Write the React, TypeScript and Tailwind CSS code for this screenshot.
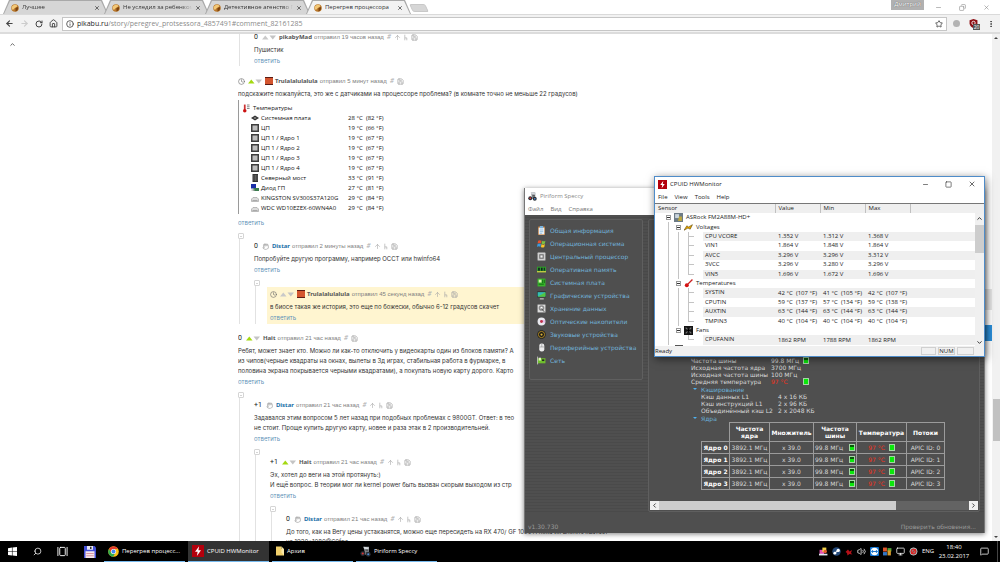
import React from "react";
import {
  ArrowLeft, ArrowRight, RotateCw, Home, Info, Star, X, Minus, Square, Copy, Search,
  Volume2, MessageSquare, Save, Clock, ArrowUp, ChevronUp, ChevronDown, ChevronLeft,
  ChevronRight, MoreVertical, Hand, GalleryHorizontal, Monitor,
} from "lucide-react";

/* ---------- browser chrome ---------- */

const Cookie = () => (
  <svg viewBox="0 0 16 16" className="size-2 shrink-0">
    <circle cx="8" cy="8" r="7.5" fill="#b9772a" />
    <path d="M2 5C5 1 10 0 13 4c-2 3-7 4-9 8C1 10 1 7 2 5z" fill="#f3c877" />
    <path d="M9 8l5-2c1 4-1 8-5 9z" fill="#7c430f" />
  </svg>
);

function Tab({ title, active = false }: { title: string; active?: boolean }) {
  return (
    <div className={`-mr-1 h-3.5 w-[105px] bg-[#a9a9a9] pt-px [clip-path:polygon(0_100%,6px_0,calc(100%-6px)_0,100%_100%)] ${active ? "z-10" : ""}`}>
      <div className={`flex h-full items-center gap-[3px] px-2 [clip-path:polygon(1px_100%,7px_0,calc(100%-7px)_0,calc(100%-1px)_100%)] ${active ? "bg-[#f2f2f2]" : "bg-[#d6d6d6]"}`}>
        <Cookie />
        <a href="#tab" className={`min-w-0 flex-1 overflow-hidden text-[6px] whitespace-nowrap text-[#333] ${active ? "" : "[mask-image:linear-gradient(to_right,black_85%,transparent)]"}`}>{title}</a>
        <button aria-label="Закрыть вкладку"><X className="size-[6px] text-[#444]" strokeWidth={3} /></button>
      </div>
    </div>
  );
}

function Browser() {
  return (
    <>
      <div className="flex h-3.5 shrink-0 items-start bg-white pl-[3px]">
        <Tab title="Лучшее" />
        <Tab title="Не уследил за ребенком" />
        <Tab title="Детективное агенство П" />
        <Tab title="Перегрев процессора" active />
        <button aria-label="Новая вкладка" className="mt-1 ml-1 h-2 w-4 skew-x-[25deg] rounded-xs border border-[#c8c8c8] bg-[#d6d6d6]" />
        <div className="flex-1" />
        <span className="h-[10px] w-[33px] bg-[#b1b1b1] text-center text-[6px] leading-[9px] text-white [text-shadow:0_0_1px_#333]">Дмитрий</span>
        <div className="flex h-3.5 items-center gap-[17px] pr-2.5 pl-[11px] text-[#888]">
          <button aria-label="Свернуть"><Minus className="size-[7px]" /></button>
          <button aria-label="Развернуть"><Copy className="size-[7px] rotate-90" /></button>
          <button aria-label="Закрыть"><X className="size-[7px]" /></button>
        </div>
      </div>
      <div className="flex h-5 shrink-0 items-center border-t border-b-2 border-t-[#dadada] border-b-[#dcdcdc] bg-[#f2f2f2] px-[5px] text-[#444]">
        <div className="flex w-[57px] shrink-0 items-center gap-[6px]">
          <button aria-label="Назад"><ArrowLeft className="size-[9px]" strokeWidth={3} /></button>
          <button aria-label="Вперёд"><ArrowRight className="size-[9px] text-[#ccc]" strokeWidth={3} /></button>
          <button aria-label="Обновить"><RotateCw className="size-2" strokeWidth={3} /></button>
          <button aria-label="Домой"><Home className="size-[9px]" strokeWidth={2.5} /></button>
        </div>
        <div className="flex h-[14px] min-w-0 flex-1 items-center gap-[3px] border border-[#c6c6c6] bg-white px-[3px]">
          <Info className="size-2 shrink-0" strokeWidth={2.5} />
          <div className="relative flex-1">
            <div className="text-[7px] leading-[10px] text-[#8a8a8a]" aria-hidden="true"><span className="text-[#222]">pikabu.ru</span>/story/peregrev_protsessora_4857491#comment_82161285</div>
            <input aria-label="Адресная строка" className="absolute inset-0 w-full bg-transparent text-[7px] outline-none" />
          </div>
          <button aria-label="В закладки"><Star className="size-2" strokeWidth={2.5} /></button>
        </div>
        <div className="flex items-center gap-[9px] pl-[6px]">
          <span className="size-[7px] rounded-full bg-[#b3b3b3]" />
          <span className="relative">
            <svg viewBox="0 0 16 16" className="size-[9px]"><path d="M8 0l7 2v6c0 4-4 7-7 8-3-1-7-4-7-8V2z" fill="#8d0f14" /><circle cx="8" cy="7" r="3" fill="none" stroke="#fff" strokeWidth="1.5" /></svg>
            <span className="absolute top-[5px] left-[4px] h-[6px] w-[7px] bg-[#555] text-center text-[5px] leading-[6px] text-white">20</span>
          </span>
          <button aria-label="Меню"><MoreVertical className="size-2" strokeWidth={3} /></button>
        </div>
      </div>
    </>
  );
}

/* ---------- page ---------- */

type CommentProps = {
  score?: string;
  vote?: "grey" | "green" | "hand";
  user: string;
  when: string;
  avatar?: boolean;
  self?: boolean;
  root?: boolean;
  highlight?: boolean;
  lines?: string[];
  media?: React.ReactNode;
  children?: React.ReactNode;
};

const Branch = () => (
  <svg viewBox="0 0 10 16" className="h-[7px] w-1" fill="none" stroke="currentColor" strokeWidth="1.6"><path d="M2 1v14M2 9h5v6" /></svg>
);

function Comment({ score, vote = "grey", user, when, avatar, self, root, highlight, lines = [], media, children }: CommentProps) {
  return (
    <article>
      <div className={highlight ? "-ml-[3px] bg-[#fff5d0] pt-px pb-px pl-[3px]" : ""}>
        <header className="flex h-3 items-center text-[6px] whitespace-nowrap text-[#808080]">
          {score ? <span className="mr-1 text-[7px] text-[#222]">{score}</span> : <Clock className="mr-[3px] size-[7px] text-[#666]" />}
          {vote === "hand" ? <Hand className="mr-[3px] size-[7px] -rotate-12 text-[#999]" /> : (
            <svg viewBox="0 0 28 10" className="mr-[3px] h-[5px] w-[14px]">
              <path d="M0 9l6.500-8L13 9z" fill={vote === "green" ? "#a4d911" : "#c9c9c9"} />
              <path d="M15 1h13l-6.500 8z" fill="#c4c4c4" />
            </svg>
          )}
          {avatar && <span className="mr-[2px] h-2 w-2 border-y border-[#5b1b14] bg-[#d4552f]" />}
          <a href="#user" className={`mr-[2px] font-['Noto_Sans',sans-serif] font-bold ${self ? "text-[#1b6fa8]" : "text-[#555]"}`}>{user}</a>
          <span className="font-['Liberation_Sans',sans-serif]">отправил {when}</span>
          <span className="ml-[3px] flex items-center gap-[3px] text-[#a5a5a5]">
            <span className="text-[7px] text-[#b0b0b0] italic">#</span>
            {!root && <><ArrowUp className="size-[7px]" /><Branch /></>}
            <Save className="size-[7px]" strokeWidth={2.5} />
          </span>
        </header>
        {lines.length > 0 && (
          <p className="mt-0.5 font-['Inter',sans-serif] text-[6px] leading-[10px] whitespace-nowrap text-[#333]">
            {lines.map((l) => <span key={l} className="block">{l}</span>)}
          </p>
        )}
        {media}
        <a href="#reply" className="mt-px block font-['Inter',sans-serif] text-[6px] leading-[10px] text-[#5f93b8]">ответить</a>
      </div>
      {children && (
        <div className="mt-[5px]">
          <button aria-label="Свернуть ветку" className="flex size-[6px] items-center rounded-[1px] border border-[#d5d5d5] px-px"><span className="h-px w-full bg-[#d5d5d5]" /></button>
          <div className="ml-px border-l border-[#e2e2e2] pt-px pl-[14px]">{children}</div>
        </div>
      )}
    </article>
  );
}

const sensors: [string, string, string][] = [
  ["board", "Системная плата", "28 °C  (82 °F)"],
  ["cpu", "ЦП", "19 °C  (66 °F)"],
  ["cpu", "ЦП 1 / Ядро 1", "19 °C  (67 °F)"],
  ["cpu", "ЦП 1 / Ядро 2", "19 °C  (67 °F)"],
  ["cpu", "ЦП 1 / Ядро 3", "19 °C  (67 °F)"],
  ["cpu", "ЦП 1 / Ядро 4", "19 °C  (67 °F)"],
  ["north", "Северный мост", "33 °C  (91 °F)"],
  ["gpu", "Диод ГП", "27 °C  (81 °F)"],
  ["disk", "KINGSTON SV300S37A120G", "29 °C  (84 °F)"],
  ["disk", "WDC WD10EZEX-60WN4A0", "29 °C  (84 °F)"],
];

function SensorIcon({ kind }: { kind: string }) {
  return (
    <svg viewBox="0 0 16 16" className="size-2 shrink-0">
      {kind === "board" && <><path d="M8 3l8 5-8 5-8-5z" fill="#333" /><path d="M8 6l3 2-3 2-3-2z" fill="#999" /></>}
      {kind === "cpu" && <><rect width="16" height="16" fill="#3d3d3d" /><rect x="3" y="3" width="10" height="10" fill="#bdbdbd" /></>}
      {kind === "north" && <><rect x="3" width="11" height="16" fill="#333" /><path d="M6 2v12M9 2v12M12 2v12" stroke="#888" /></>}
      {kind === "gpu" && <><rect width="10" height="9" fill="#1a2ea8" /><rect x="5" y="8" width="11" height="6" fill="#3b7d4f" /><path d="M1 12h7" stroke="#999" strokeWidth="2" /></>}
      {kind === "disk" && <><path d="M1 10l3-3h8l3 3v5H1z" fill="#dcdcdc" stroke="#888" /><path d="M3 13h10" stroke="#777" /></>}
    </svg>
  );
}

const SensorShot = () => (
  <div className="mt-px mb-1 h-[114px] w-[160px] border-l border-[#9a9a9a] pt-[3px] pl-1 font-['Open_Sans',sans-serif] text-[6px] leading-[10px] text-[#111]">
    <div className="flex items-center gap-[3px]">
      <svg viewBox="0 0 16 20" className="h-[9px] w-[7px]"><path d="M4 1v12" stroke="#c33" strokeWidth="4" /><circle cx="4" cy="15" r="4" fill="#c11" /><path d="M9 2h6M9 6h6M9 10h6" stroke="#777" strokeWidth="2" /></svg>
      Температуры
    </div>
    <table className="ml-2 border-collapse">
      <tbody>
        {sensors.map(([kind, name, value]) => (
          <tr key={name}>
            <td className="w-[97px] p-0"><span className="flex h-[10px] items-center gap-0.5 whitespace-nowrap"><SensorIcon kind={kind} />{name}</span></td>
            <td className="p-0 whitespace-pre">{value}</td>
          </tr>
        ))}
      </tbody>
    </table>
  </div>
);

function Page() {
  return (
    <div className="flex min-h-0 flex-1 bg-white font-['Roboto',sans-serif]">
      <aside className="w-[238px] shrink-0 pt-[7px] pl-[9px]"><ChevronUp className="size-[7px] text-[#555]" strokeWidth={3} /></aside>
      <main className="min-w-0 flex-1 overflow-hidden">
        <div className="ml-px h-[32px] overflow-hidden border-l border-[#e2e2e2] pl-[14px]">
          <div className="-mt-[3px]"><Comment score="0" user="pikabyMad" when="19 часов назад" lines={["Пушистик"]} /></div>
        </div>
        <div className="mt-[9px]">
          <Comment root vote="green" avatar user="Trulalalulalula" when="5 минут назад"
            lines={["подскажите пожалуйста, это же с датчиками на процессоре проблема? (в комнате точно не меньше 22 градусов)"]}
            media={<SensorShot />}>
            <Comment score="0" vote="hand" self user="Distar" when="2 минуты назад" lines={["Попробуйте другую программу, например OCCT или hwinfo64"]}>
              <Comment highlight avatar user="Trulalalulalula" when="45 секунд назад" lines={["в биосе такая же история, это еще по божески, обычно 6-12 градусов скачет"]} />
            </Comment>
          </Comment>
        </div>
        <div className="mt-2">
          <Comment root score="0" vote="green" user="Hait" when="21 час назад" lines={[
            "Ребят, может знает кто. Можно ли как-то отключить у видеокарты один из блоков памяти? А",
            "из чипов(черные квадраты на окнах, вылеты в 3д играх, стабильная работа в фурмарке,  в",
            "половина экрана покрывается черными квадратами), а покупать новую карту дорого. Карто",
          ]}>
            <Comment score="+1" vote="hand" self user="Distar" when="21 час назад" lines={[
              "Задавался этим вопросом 5 лет назад при подобных проблемах с 9800GT. Ответ: в тео",
              "не стоит. Проще купить другую карту, новее и раза этак в 2 производительней.",
            ]}>
              <Comment score="+1" vote="green" user="Hait" when="21 час назад" lines={[
                "Эх, хотел до веги на этой протянуть:)",
                "И ещё вопрос. В теории мог ли kernel power быть вызван скорым выходом из стр",
              ]}>
                <Comment score="0" vote="hand" self user="Distar" when="21 час назад" lines={[
                  "До того, как на Вегу цены устаканятся, можно еще пересидеть на RX 470/ GF 1050TI пока их вполне хватает",
                  "на 1920*1080@60fps",
                ]} />
              </Comment>
            </Comment>
          </Comment>
        </div>
      </main>
      <div className="flex w-[7px] shrink-0 flex-col pt-[255px]">
        <div className="h-[21px] bg-[#e4e4e4]" />
        <div className="mt-[15px] h-4 bg-[#2b8fd9]" />
      </div>
      <div className="flex w-2 shrink-0 flex-col items-center bg-[#f1f1f1] py-[3px]">
        <svg viewBox="0 0 8 4" className="h-[2px] w-1"><path d="M0 4l4-4 4 4z" fill="#444" /></svg>
        <div className="mt-[360px] h-[42px] w-[7px] bg-[#c1c1c1]" />
        <svg viewBox="0 0 8 4" className="mt-auto h-[2px] w-1"><path d="M0 0l4 4 4-4z" fill="#444" /></svg>
      </div>
    </div>
  );
}

/* ---------- Speccy ---------- */

const SpeccyLogo = ({ className }: { className: string }) => (
  <svg viewBox="0 0 16 16" className={className}>
    <path d="M5 1h8v12H8z" fill="#8d9299" /><path d="M5 1l8 1-1 3-6-1z" fill="#d5d9dd" /><path d="M8 6h4M8 9h4" stroke="#444" strokeWidth="1.5" />
    <circle cx="4" cy="11" r="3.5" fill="#2a2f36" /><circle cx="12" cy="12" r="3.5" fill="#2a2f36" /><circle cx="4" cy="11" r="1.5" fill="#d33" /><circle cx="12" cy="12" r="1.5" fill="#4b8bd6" />
  </svg>
);

const navItems = [
  "Общая информация", "Операционная система", "Центральный процессор", "Оперативная память", "Системная плата",
  "Графические устройства", "Хранение данных", "Оптические накопители", "Звуковые устройства", "Периферийные устройства", "Сеть",
];

const NavIcon = ({ n }: { n: number }) => (
  <svg viewBox="0 0 16 16" className="size-[9px] shrink-0">
    {n === 0 && <><rect x="2" y="1" width="12" height="15" fill="#c97b34" /><rect x="3" y="3" width="10" height="12" fill="#e6f1fa" /><rect x="5" width="6" height="4" fill="#7ab3dd" /><path d="M5 7h6M5 10h6M5 13h4" stroke="#6aa2d0" /></>}
    {n === 1 && <><path d="M2 3q3-2 6 0l-1 5q-3-2-6 0z" fill="#e8502c" /><path d="M9 3q3 2 6 0l-1 5q-3 2-6 0z" fill="#7cc142" /><path d="M1 9q3-2 6 0l-1 5q-3-2-6 0z" fill="#3b9be0" /><path d="M8 9q3 2 6 0l-1 5q-3 2-6 0z" fill="#fbc62a" /></>}
    {n === 2 && <><rect x="1" y="1" width="14" height="14" rx="1" fill="#d0d0d0" /><rect x="4" y="4" width="8" height="8" fill="#6e6e6e" /><rect x="6" y="6" width="4" height="4" fill="#eee" /></>}
    {n === 3 && <><rect y="3" width="16" height="10" fill="#2e9b28" /><path d="M2 5h3v5H2zM7 5h3v5H7zM12 5h2v5h-2z" fill="#122" /><path d="M0 12h16" stroke="#e5d34b" strokeWidth="2" /></>}
    {n === 4 && <><rect x="1" y="1" width="14" height="14" fill="#37b52b" /><rect x="3" y="3" width="5" height="5" fill="#d8f3b0" /><path d="M10 3v6M13 3v6M3 11h9" stroke="#0f6511" strokeWidth="1.5" /></>}
    {n === 5 && <><rect y="1" width="16" height="10" rx="1" fill="#222" /><rect x="1" y="2" width="14" height="8" fill="#35bdb4" /><path d="M1 10l14-8v8z" fill="#54c640" /><path d="M5 14h7" stroke="#ccc" strokeWidth="2" /></>}
    {n === 6 && <><rect x="1" y="1" width="14" height="14" fill="#ddd" /><circle cx="8" cy="7" r="5" fill="#8a8a8a" /><circle cx="8" cy="7" r="2" fill="#fff" /><path d="M8 8l5 6" stroke="#444" strokeWidth="1.5" /></>}
    {n === 7 && <><circle cx="8" cy="8" r="7" fill="#e9e9ee" /><path d="M8 8l6-4v7z" fill="#e3b8e6" /><circle cx="8" cy="8" r="2.6" fill="#c0304a" /></>}
    {n === 8 && <><circle cx="8" cy="8" r="7.5" fill="#1b1a16" /><circle cx="8" cy="8" r="5.5" fill="none" stroke="#c99b2b" strokeWidth="1.5" /><circle cx="8" cy="8" r="2" fill="#d9b13b" /></>}
    {n === 9 && <><rect x="4" y="1" width="9" height="14" rx="4" fill="#ececec" /><path d="M8.500 1v6M4 7h9" stroke="#888" /></>}
    {n === 10 && <><rect x="1" y="4" width="14" height="9" fill="#6fbf2c" /><path d="M3 3h4v5H3z" fill="#e6f3c8" /><path d="M9 6h4v3H9z" fill="#222" /><path d="M1 1v14" stroke="#ccc" strokeWidth="1.5" /></>}
  </svg>
);

const Gauge = ({ full = false }: { full?: boolean }) => (
  <span className={`inline-block h-[7px] w-[6px] shrink-0 border border-[#a5d6a5] ${full ? "bg-[#0be80b]" : "bg-linear-to-b from-[#0a5a0a] from-40% to-[#0be80b] to-40%"}`} />
);

function Section({ title }: { title: string }) {
  return (
    <button className="flex h-2 items-center gap-1 pl-[2px] text-[#6bb2da]">
      <svg viewBox="0 0 8 4" className="h-[2px] w-1"><path d="M0 0h8L4 4z" fill="#4fb0ee" /></svg>{title}
    </button>
  );
}

function Speccy() {
  const coreCell = "border border-[#9b9b9b] px-px py-0 text-center whitespace-nowrap";
  return (
    <section aria-label="Piriform Speccy" className="absolute top-[188px] left-[524px] flex h-[345px] w-[461px] flex-col border-x border-[#777] bg-[#4f4f4f] font-['DejaVu_Sans',sans-serif] text-[6px] text-[#d8d8d8] shadow-[0_1px_5px_rgba(0,0,0,0.5)]">
      <div className="h-[27px] shrink-0 bg-white font-['Open_Sans',sans-serif] text-[6px] text-[#888]">
        <div className="flex h-4 items-center gap-[3px] pl-[3px]"><SpeccyLogo className="size-[9px]" />Piriform Speccy</div>
        <nav className="flex h-[10px] items-center gap-[7px] pl-[3px] text-[#777]"><button>Файл</button><button>Вид</button><button>Справка</button></nav>
      </div>
      <div className="flex min-h-0 flex-1 gap-[5px] bg-[repeating-linear-gradient(#4f4f4f_0_2px,#4a4a4a_2px_3px)] px-1 pt-1">
        <nav className="w-[114px] shrink-0 self-start rounded-xs border border-[#5f5f5f] bg-[#4f4f4f] pt-1 pb-3">
          {navItems.map((label, i) => (
            <a key={label} href="#section" className="flex h-[13px] items-center gap-1 pl-[7px] whitespace-nowrap text-[#72b3da]"><NavIcon n={i} />{label}</a>
          ))}
        </nav>
        <div className="flex min-w-0 flex-1 flex-col justify-end rounded-xs border border-[#5f5f5f] bg-[#4f4f4f]">
          <div className="pl-[42px] leading-[7px]">
            <table className="border-collapse">
              <tbody>
                {[["Частота шины", "99.8 МГц", 1], ["Исходная частота ядра", "3700 МГц", 0], ["Исходная частота шины", "100 МГц", 0], ["Средняя температура", "97 °C", 2]].map(([k, v, g]) => (
                  <tr key={k as string} className="h-[7px]">
                    <th scope="row" className="w-[80px] p-0 text-left font-normal whitespace-nowrap">{k}</th>
                    <td className={`p-0 ${g === 2 ? "text-[#f0321c]" : ""}`}><span className="flex h-[7px] w-[38px] items-center justify-between whitespace-nowrap">{v}{g !== 0 && <Gauge full={g === 2} />}</span></td>
                  </tr>
                ))}
              </tbody>
            </table>
            <Section title="Кэширование" />
            <table className="ml-[10px] border-collapse">
              <tbody>
                {[["Кэш данных L1", "4 x 16 КБ"], ["Кэш инструкций L1", "2 x 96 КБ"], ["Объединённый кэш L2", "2 x 2048 КБ"]].map(([k, v]) => (
                  <tr key={k} className="h-[7px]"><th scope="row" className="w-[77px] p-0 text-left font-normal whitespace-nowrap">{k}</th><td className="p-0 whitespace-nowrap">{v}</td></tr>
                ))}
              </tbody>
            </table>
            <Section title="Ядра" />
            <table className="mb-[11px] ml-[10px] border-collapse">
              <thead>
                <tr className="h-[19px] text-white">
                  <td className="w-[28px] p-0" />
                  <th className={`w-10 ${coreCell}`}>Частота<br />ядра</th>
                  <th className={`w-11 ${coreCell}`}>Множитель</th>
                  <th className={`w-[43px] ${coreCell}`}>Частота<br />шины</th>
                  <th className={`w-[50px] ${coreCell}`}>Температура</th>
                  <th className={`w-[38px] ${coreCell}`}>Потоки</th>
                </tr>
              </thead>
              <tbody>
                {[0, 1, 2, 3].map((n) => (
                  <tr key={n} className="h-3">
                    <th scope="row" className={`text-white ${coreCell}`}>Ядро {n}</th>
                    <td className={coreCell}>3892.1 МГц</td>
                    <td className={coreCell}>x 39.0</td>
                    <td className={coreCell}><span className="flex items-center justify-between">99.8 МГц <Gauge /></span></td>
                    <td className={`text-[#f0321c] ${coreCell}`}><span className="flex items-center justify-center gap-1">97 °C <Gauge full /></span></td>
                    <td className={coreCell}>APIC ID: {n}</td>
                  </tr>
                ))}
              </tbody>
            </table>
          </div>
          <div className="mx-px mb-px flex h-[9px] shrink-0 bg-[#636363]">
            <button aria-label="Влево" className="flex w-[9px] items-center justify-center bg-[#f0f0f0] text-[#333]"><ChevronLeft className="size-[7px]" strokeWidth={3} /></button>
            <div className="w-[237px] bg-[#cdcdcd]" />
            <button aria-label="Вправо" className="ml-auto flex w-[9px] items-center justify-center bg-[#f0f0f0] text-[#333]"><ChevronRight className="size-[7px]" strokeWidth={3} /></button>
          </div>
        </div>
      </div>
      <footer className="flex h-[21px] shrink-0 items-center justify-between pt-2 pr-2 pl-[3px] text-[#999]"><span>v1.30.730</span><a href="#update">Проверить обновения...</a></footer>
    </section>
  );
}

/* ---------- HWMonitor ---------- */

const Bolt = ({ className }: { className: string }) => (
  <svg viewBox="0 0 16 16" className={className}><rect width="16" height="16" fill="#b3000c" /><path d="M9.500 1.500L4 9h3.500l-1 5.500L12 7H8.500z" fill="#fff" /></svg>
);

const readings: (string[] | string)[] = [
  "ASRock FM2A88M-HD+", "Voltages",
  ["CPU VCORE", "1.352 V", "1.312 V", "1.368 V"],
  ["VIN1", "1.864 V", "1.848 V", "1.864 V"],
  ["AVCC", "3.296 V", "3.296 V", "3.312 V"],
  ["3VCC", "3.296 V", "3.280 V", "3.296 V"],
  ["VIN5", "1.696 V", "1.672 V", "1.696 V"],
  "Temperatures",
  ["SYSTIN", "42 °C  (107 °F)", "41 °C  (105 °F)", "42 °C  (107 °F)"],
  ["CPUTIN", "59 °C  (137 °F)", "57 °C  (134 °F)", "59 °C  (138 °F)"],
  ["AUXTIN", "63 °C  (144 °F)", "63 °C  (144 °F)", "63 °C  (144 °F)"],
  ["TMPIN3", "40 °C  (104 °F)", "40 °C  (104 °F)", "40 °C  (104 °F)"],
  "Fans",
  ["CPUFANIN", "1862 RPM", "1788 RPM", "1862 RPM"],
];
const shaded = [2, 4, 6, 8, 10, 13];
const lastLeaf = [6, 11, 13];

function GroupIcon({ name }: { name: string }) {
  return (
    <svg viewBox="0 0 16 16" className="size-[9px] shrink-0">
      {name.startsWith("ASRock") && <><rect width="16" height="16" fill="#6d7b86" /><path d="M2 2h7v7H2z" fill="#c9d4dc" /><path d="M9 6h5v8H7z" fill="#bda83d" /></>}
      {name === "Voltages" && <path d="M0 13l5-8 3 2 7-4-4 8-4-2z" fill="#e6a500" stroke="#5b4300" />}
      {name === "Temperatures" && <><path d="M15 1L6 10" stroke="#c22" strokeWidth="2.500" /><circle cx="5" cy="11" r="3.500" fill="#d41212" /></>}
      {name === "Fans" && <><rect width="16" height="16" fill="#151515" /><path d="M3 3l10 10M13 3L3 13" stroke="#777" strokeWidth="2" /><circle cx="8" cy="8" r="2.500" fill="#000" /></>}
    </svg>
  );
}

const Expander = () => (
  <span className="flex size-[5px] shrink-0 items-center border border-[#999] bg-white"><span className="h-px w-full bg-[#333]" /></span>
);

function TreeCell({ row, index }: { row: string[] | string; index: number }) {
  if (index === 0)
    return <span className="flex h-[9px] items-center gap-[3px] pl-[11px]"><Expander /><GroupIcon name={row as string} />{row}</span>;
  const rail = <span className="ml-[13px] w-[10px] shrink-0 self-stretch border-l border-[#c4c4c4]" />;
  if (typeof row === "string")
    return <span className="flex h-full items-center">{rail}<span className="-ml-[2px] flex items-center gap-[3px]"><Expander /><GroupIcon name={row} />{row}</span></span>;
  return (
    <span className="flex h-full items-stretch">
      {rail}
      <span className={`w-[10px] shrink-0 ${index < 12 ? "border-l border-[#c4c4c4]" : ""}`} />
      <span className="flex w-[15px] shrink-0 flex-col">
        <span className="h-[5px] w-[6px] border-b border-l border-[#c4c4c4]" />
        {!lastLeaf.includes(index) && <span className="w-px flex-1 bg-[#c4c4c4]" />}
      </span>
      <span className={`flex-1 pl-[2px] ${shaded.includes(index) ? "bg-[#efefef]" : ""}`}>{row[0]}</span>
    </span>
  );
}

function HWMonitor() {
  return (
    <section aria-label="CPUID HWMonitor" className="absolute top-[176px] left-[654px] flex h-[181px] w-[331px] flex-col border border-[#4f8cc9] bg-white font-['Open_Sans',sans-serif] text-[6px] leading-[9px] text-[#222] shadow-[1px_2px_8px_rgba(0,0,0,0.55)]">
      <div className="flex h-[14px] shrink-0 items-center gap-[3px] pr-2 pl-[3px]">
        <Bolt className="size-[9px]" />
        <span className="flex-1">CPUID HWMonitor</span>
        <div className="flex items-center gap-4">
          <button aria-label="Minimize"><Minus className="size-[7px]" /></button>
          <button aria-label="Maximize"><Square className="size-[7px]" /></button>
          <button aria-label="Close"><X className="size-2" /></button>
        </div>
      </div>
      <nav className="flex h-3 shrink-0 items-center gap-[7px] pl-[3px]"><button>File</button><button>View</button><button>Tools</button><button>Help</button></nav>
      <div className="flex min-h-0 flex-1 overflow-hidden border-t border-[#777]">
        <div className="flex min-w-0 flex-1 flex-col">
          <table className="h-[141px] w-full table-fixed border-collapse">
            <thead>
              <tr className="h-[9px] bg-[#efefef] text-left">
                <th className="w-[120px] border-r border-[#c0c0c0] p-0 pl-[3px] font-normal">Sensor</th>
                <th className="w-[45px] border-r border-[#c0c0c0] p-0 pl-[3px] font-normal">Value</th>
                <th className="w-[45px] border-r border-[#c0c0c0] p-0 pl-[3px] font-normal">Min</th>
                <th className="w-[45px] border-r border-[#c0c0c0] p-0 pl-[3px] font-normal">Max</th>
                <th className="p-0" aria-label="Empty" />
              </tr>
            </thead>
            <tbody>
              {readings.map((row, i) => (
                <tr key={i} className="h-[9px]">
                  <td className="h-[9px] p-0 whitespace-nowrap"><TreeCell row={row} index={i} /></td>
                  {[1, 2, 3].map((c) => (
                    <td key={c} className={`p-0 pl-[3px] whitespace-pre ${shaded.includes(i) ? "bg-[#efefef]" : ""}`}>{typeof row === "string" ? "" : row[c]}</td>
                  ))}
                  <td className={`p-0 ${shaded.includes(i) ? "bg-[#efefef]" : ""}`} />
                </tr>
              ))}
            </tbody>
          </table>
          <span className="ml-5 h-px w-2 shrink-0 bg-[#555]" />
        </div>
        <div className="flex w-[9px] shrink-0 flex-col items-center">
          <div className="h-[10px] w-full bg-[#efefef]" />
          <div className="flex w-full flex-1 flex-col items-center bg-[#f0f0f0] pt-px">
            <ChevronUp className="size-[7px]" strokeWidth={3} />
            <div className="mt-[3px] h-7 w-full bg-[#cdcdcd]" />
            <ChevronDown className="mt-auto size-[7px]" strokeWidth={3} />
          </div>
        </div>
      </div>
      <footer className="flex h-[10px] shrink-0 items-center gap-[2px] bg-[#f0f0f0] pr-[10px]">
        <span className="flex-1">Ready</span>
        <span className="h-2 w-[15px] border border-[#d0d0d0]" />
        <span className="h-2 w-[17px] border border-[#d0d0d0] text-center leading-[7px]">NUM</span>
        <span className="h-2 w-[17px] border border-[#d0d0d0]" />
      </footer>
    </section>
  );
}

/* ---------- taskbar ---------- */

const ChromeLogo = () => (
  <svg viewBox="0 0 24 24" className="size-[11px] shrink-0">
    <circle cx="12" cy="12" r="11.500" fill="#fbc116" />
    <path d="M2 6.300A11.500 11.500 0 0 1 22 6.300H12a5.700 5.700 0 0 0-5 8.500z" fill="#e33b2e" />
    <path d="M2 6.300A11.500 11.500 0 0 0 11 23.500l5-8.500a5.700 5.700 0 0 1-9 0z" fill="#2da94f" />
    <circle cx="12" cy="12" r="5.500" fill="#fff" /><circle cx="12" cy="12" r="4.300" fill="#4285f4" />
  </svg>
);

function Task({ icon, label, active = false }: { icon: React.ReactNode; label: string; active?: boolean }) {
  return (
    <button className={`flex h-full w-[81px] items-center gap-[3px] border-b border-[#76b9ed] pl-1 whitespace-nowrap ${active ? "bg-[#333]" : ""}`}>{icon}{label}</button>
  );
}

function Taskbar() {
  return (
    <footer className="flex h-[21px] shrink-0 items-center bg-black font-['Open_Sans',sans-serif] text-[6px] text-white">
      <div className="flex w-[104px] shrink-0 items-center justify-between px-2">
        <button aria-label="Пуск"><svg viewBox="0 0 16 16" className="size-[9px]"><path d="M0 2l7-1v6.500H0zM8 1l8-1v7.500H8zM0 8.500h7V15l-7-1zM8 8.500h8V16l-8-1z" fill="#fff" /></svg></button>
        <button aria-label="Поиск"><Search className="size-[9px] -scale-x-100" /></button>
        <button aria-label="Представление задач"><GalleryHorizontal className="size-[11px]" /></button>
        <button aria-label="Сохранение">
          <svg viewBox="0 0 16 16" className="size-3"><path d="M0 0h14l2 2v14H0z" fill="#4450d8" /><rect x="4" width="8" height="5" fill="#e8e8f5" /><rect x="8" y="1" width="2" height="3" fill="#333" /><rect x="2" y="7" width="12" height="9" fill="#f6e9ee" /><path d="M3 10h10M3 13h10" stroke="#d0798b" /></svg>
        </button>
      </div>
      <div className="flex h-full flex-1 gap-[3px]">
        <Task icon={<ChromeLogo />} label="Перегрев процесс..." />
        <Task active icon={<Bolt className="size-3 shrink-0" />} label="CPUID HWMonitor" />
        <Task icon={<svg viewBox="0 0 16 20" className="h-[10px] w-2"><path d="M0 1h11v5h5v13H0z" fill="#f0cf6b" /><path d="M11 1v12l5 6V6z" fill="#fbe9a8" /></svg>} label="Архив" />
        <Task icon={<SpeccyLogo className="size-[11px]" />} label="Piriform Speccy" />
      </div>
      <div className="flex items-center gap-1">
        <svg viewBox="0 0 16 16" className="size-[9px]"><path d="M1 5h8v9H1z" fill="#e04fb0" /><path d="M6 1h7v8H6z" fill="#f3d24a" /><path d="M0 12h15v3H0z" fill="#dfe6f2" /><circle cx="11" cy="8" r="3" fill="#e4572e" /></svg>
        <svg viewBox="0 0 16 16" className="size-[9px]"><circle cx="8" cy="8" r="7.500" fill="#254a7a" /><circle cx="11" cy="6" r="3" fill="#fff" /><circle cx="5" cy="11" r="2.500" fill="#fff" /><path d="M5 11l6-5" stroke="#fff" strokeWidth="2" /></svg>
        <svg viewBox="0 0 16 16" className="size-2"><path d="M1 8l5-5 3 4 5-3-2 6 3 3-6-1-4 3-1-5z" fill="#b51018" /></svg>
        <Volume2 className="size-[9px]" />
        <svg viewBox="0 0 16 16" className="size-[9px]"><rect width="16" height="16" rx="2" fill="#1274d0" /><circle cx="8" cy="8" r="6.500" fill="#fff" /><path d="M1.500 8l4-3v2h5V5l4 3-4 3V9h-5v2z" fill="#1b73c9" /></svg>
        <svg viewBox="0 0 16 16" className="size-[9px]"><path d="M0 1h7v7H0z" fill="#e0562b" /><path d="M8 2h7v6H8z" fill="#54a53b" /><path d="M0 9h7v6H0z" fill="#3577c5" /><path d="M8 6h6v9H8z" fill="#d99b2c" /></svg>
        <Monitor className="size-[9px]" />
        <svg viewBox="0 0 16 16" className="size-[9px]"><circle cx="8" cy="8" r="6.500" fill="#888" stroke="#e8e8e8" /><circle cx="8" cy="8" r="4" fill="none" stroke="#d22" strokeWidth="2" /><path d="M4 12l8-8" stroke="#d22" strokeWidth="2" /></svg>
      </div>
      <span className="ml-1 w-[14px]">ENG</span>
      <div className="w-[36px] text-center leading-[9px] whitespace-nowrap"><div>18:40</div><div>23.02.2017</div></div>
      <button aria-label="Уведомления" className="ml-2"><MessageSquare className="size-[9px]" /></button>
      <span className="ml-2 h-full w-[3px] border-l border-[#444]" />
    </footer>
  );
}

export default function App() {
  return (
    <div className="relative flex h-screen flex-col overflow-hidden font-['Open_Sans',sans-serif]">
      <Browser />
      <Page />
      <Speccy />
      <HWMonitor />
      <Taskbar />
    </div>
  );
}
